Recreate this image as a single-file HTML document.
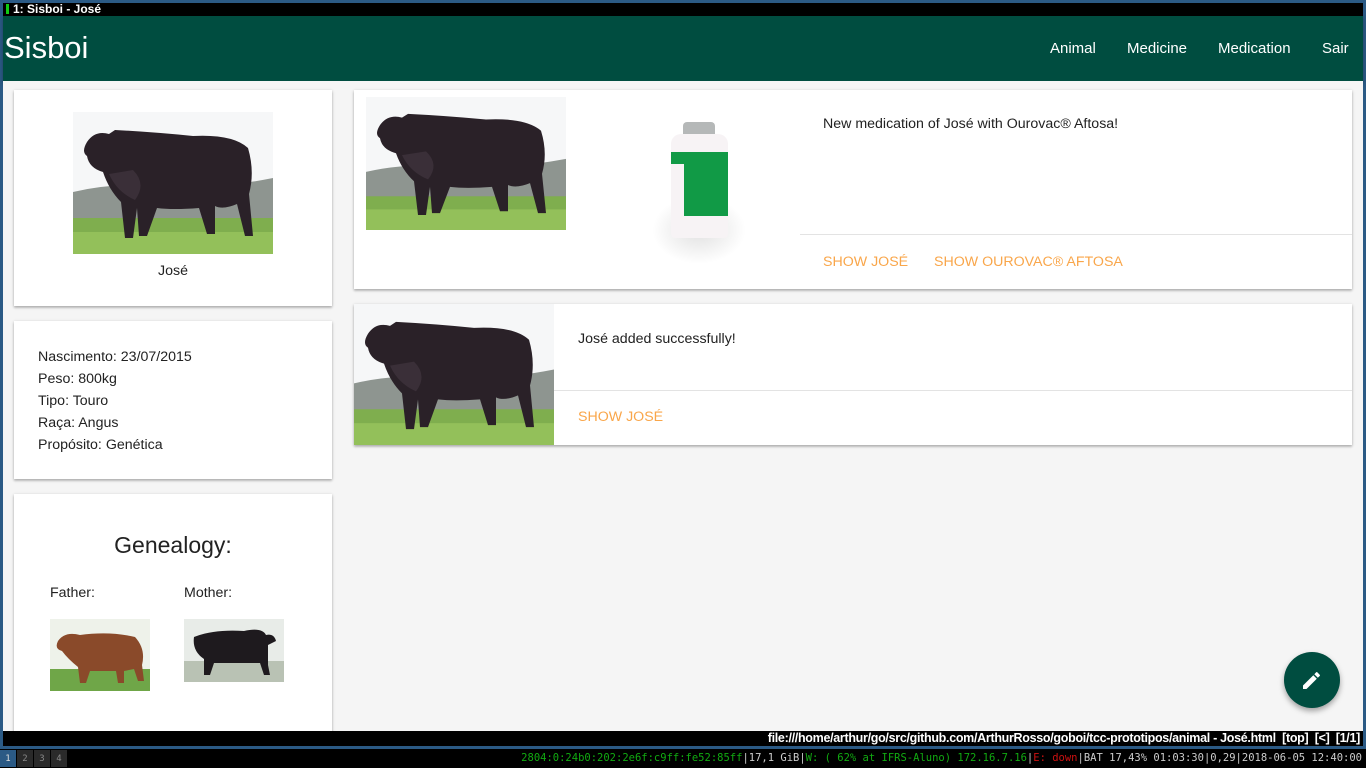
<!DOCTYPE html>
<html><head><meta charset="utf-8"><style>
*{margin:0;padding:0;box-sizing:border-box}
body{width:1366px;height:768px;overflow:hidden;background:#2b5a85;font-family:"Liberation Sans","DejaVu Sans",sans-serif;position:relative}
.abs{position:absolute}
.title{left:3px;top:3px;width:1360px;height:13px;background:#000;color:#fff;font-size:12px;line-height:12px;font-weight:bold}
.hdr{left:3px;top:16px;width:1360px;height:65px;background:#004d40;box-shadow:0 2px 4px rgba(0,0,0,.3)}
.main{left:3px;top:81px;width:1360px;height:650px;background:#f5f5f5;overflow:hidden}
.card{position:absolute;background:#fff;box-shadow:0 1px 3px rgba(0,0,0,.25),0 2px 2px rgba(0,0,0,.12)}
.t{position:absolute;font-size:14.2px;color:#222;white-space:nowrap}
.act{position:absolute;font-size:14.2px;color:#f9a64a;white-space:nowrap}
.nav{position:absolute;top:41px;font-size:15px;color:#fff}
</style></head><body>
<svg width="0" height="0" style="position:absolute"><defs>
<symbol id="bull" viewBox="0 0 200 142" preserveAspectRatio="none">
<rect width="200" height="142" fill="#f6f7f8"/>
<path d="M0 80 Q40 70 90 74 T200 66 L200 112 L0 112Z" fill="#8e9590"/>
<rect y="106" width="200" height="36" fill="#7fae4e"/>
<rect y="120" width="200" height="22" fill="#93c05a"/>
<path d="M14 30 Q22 18 36 22 L42 18 Q80 20 120 24 Q160 22 175 36 Q182 60 176 82 L180 124 L172 124 L164 92 Q150 98 142 94 L142 122 L134 122 L126 96 Q100 98 84 96 L74 124 L66 124 L64 96 L60 126 L52 126 L48 90 Q36 78 30 60 Q16 56 14 44 Q8 40 14 30Z" fill="#2a2128"/>
<path d="M36 62 Q44 80 62 88 Q74 72 60 58Z" fill="#3a2f38"/>
</symbol>
<symbol id="bull2" viewBox="0 0 100 72" preserveAspectRatio="none">
<rect width="100" height="72" fill="#eef2ea"/>
<rect y="50" width="100" height="22" fill="#6fa648"/>
<path d="M8 22 Q15 12 30 16 Q60 12 85 18 Q96 30 92 46 L94 62 L88 62 L84 50 L74 52 L74 64 L68 64 L66 52 L40 52 L36 64 L30 64 L28 48 Q18 40 12 32 Q4 30 8 22Z" fill="#8a4a2a"/>
</symbol>
<symbol id="bull3" viewBox="0 0 100 63" preserveAspectRatio="none">
<rect width="100" height="63" fill="#e8ece8"/>
<rect y="42" width="100" height="21" fill="#b9c2b4"/>
<path d="M10 18 Q30 10 60 12 Q78 8 82 16 Q90 14 92 22 L84 26 L84 46 L86 56 L80 56 L76 44 L30 44 L26 56 L20 56 L20 40 Q8 32 10 18Z" fill="#1e1a1e"/>
</symbol>
</defs></svg>

<div class="abs title"><span style="display:inline-block;width:3px;height:10px;background:#1c1;margin:1px 4px 0 3px;vertical-align:top"></span>1: Sisboi - José</div>
<div class="abs hdr">
<div class="abs" style="left:1px;top:14px;font-size:31px;color:#fff">Sisboi</div>
<div class="nav" style="left:1047px;top:24px">Animal</div>
<div class="nav" style="left:1124px;top:24px">Medicine</div>
<div class="nav" style="left:1215px;top:24px">Medication</div>
<div class="nav" style="left:1319px;top:24px">Sair</div>
</div>
<div class="abs main">
<div class="card" style="left:11px;top:9px;width:318px;height:216px">
<svg class="abs" style="left:59px;top:22px" width="200" height="142"><use href="#bull"/></svg>
<div class="t" style="left:0;width:318px;text-align:center;top:173px">José</div>
</div>
<div class="card" style="left:11px;top:240px;width:318px;height:158px">
<div class="t" style="left:24px;top:25px;line-height:22px">Nascimento: 23/07/2015<br>Peso: 800kg<br>Tipo: Touro<br>Raça: Angus<br>Propósito: Genética</div>
</div>
<div class="card" style="left:11px;top:413px;width:318px;height:260px">
<div class="t" style="left:0;width:318px;text-align:center;top:38px;font-size:23px">Genealogy:</div>
<div class="t" style="left:36px;top:91px">Father:</div>
<div class="t" style="left:170px;top:91px">Mother:</div>
<svg class="abs" style="left:36px;top:125px" width="100" height="72"><use href="#bull2"/></svg>
<svg class="abs" style="left:170px;top:125px" width="100" height="63"><use href="#bull3"/></svg>
</div>
<div class="card" style="left:351px;top:9px;width:998px;height:199px">
<svg class="abs" style="left:12px;top:7px" width="200" height="133"><use href="#bull"/></svg>
<div class="abs" style="left:290px;top:100px;width:110px;height:80px;background:radial-gradient(ellipse at center,rgba(0,0,0,.12),rgba(0,0,0,0) 60%)"></div>
<div class="abs" style="left:329px;top:32px;width:32px;height:14px;background:#b5b8b8;border-radius:4px 4px 1px 1px"></div>
<div class="abs" style="left:317px;top:44px;width:57px;height:104px;background:#f7f3f5;border-radius:10px 10px 4px 4px"></div>
<div class="abs" style="left:317px;top:62px;width:57px;height:12px;background:#119a46"></div>
<div class="abs" style="left:330px;top:74px;width:44px;height:52px;background:#119a46"></div>
<div class="t" style="left:469px;top:26px">New medication of José with Ourovac® Aftosa!</div>
<div class="abs" style="left:446px;top:144px;width:552px;height:1px;background:#e3e3e3"></div>
<div class="act" style="left:469px;top:164px">SHOW JOSÉ</div>
<div class="act" style="left:580px;top:164px">SHOW OUROVAC® AFTOSA</div>
</div>
<div class="card" style="left:351px;top:223px;width:998px;height:141px">
<svg class="abs" style="left:0;top:0" width="200" height="141"><use href="#bull"/></svg>
<div class="t" style="left:224px;top:27px">José added successfully!</div>
<div class="abs" style="left:200px;top:86px;width:798px;height:1px;background:#e3e3e3"></div>
<div class="act" style="left:224px;top:105px">SHOW JOSÉ</div>
</div>
<div class="abs" style="left:1281px;top:571px;width:56px;height:56px;border-radius:50%;background:#004d40;box-shadow:0 3px 6px rgba(0,0,0,.35)">
<svg width="56" height="56" viewBox="0 0 56 56"><path d="M19 33.5V37h3.5l10.3-10.3-3.5-3.5L19 33.5zm16.7-9.5a.9.9 0 000-1.3l-2.3-2.3a.9.9 0 00-1.3 0l-1.8 1.8 3.5 3.5 1.9-1.7z" fill="#fff"/></svg>
</div>
</div>
<div class="abs" style="left:3px;top:731px;width:1360px;height:15px;background:#000;color:#fff;font-size:12.5px;line-height:14px;text-align:right;padding-right:3px;letter-spacing:-0.3px;font-weight:bold">file:///home/arthur/go/src/github.com/ArthurRosso/goboi/tcc-prototipos/animal - José.html&nbsp; [top]&nbsp; [&lt;]&nbsp; [1/1]</div>
<div class="abs" style="left:0;top:749px;width:1366px;height:19px;background:#000;font-family:'DejaVu Sans Mono',monospace;font-size:10.5px;line-height:18px;color:#ccc">
<span class="abs" style="left:0;top:1px;width:16px;height:17px;background:#2b5a85;color:#ddd;text-align:center;font-size:9px">1</span>
<span class="abs" style="left:17px;top:1px;width:16px;height:17px;background:#2a2a2a;color:#888;text-align:center;font-size:9px">2</span>
<span class="abs" style="left:34px;top:1px;width:16px;height:17px;background:#2a2a2a;color:#888;text-align:center;font-size:9px">3</span>
<span class="abs" style="left:51px;top:1px;width:16px;height:17px;background:#2a2a2a;color:#888;text-align:center;font-size:9px">4</span>
<span class="abs" style="right:4px;top:0;white-space:nowrap;letter-spacing:0px"><span style="color:#1a1">2804:0:24b0:202:2e6f:c9ff:fe52:85ff</span>|17,1 GiB|<span style="color:#1a1">W: ( 62% at IFRS-Aluno) 172.16.7.16</span>|<span style="color:#c11">E: down</span>|BAT 17,43% 01:03:30|0,29|2018-06-05 12:40:00</span>
</div>
</body></html>
